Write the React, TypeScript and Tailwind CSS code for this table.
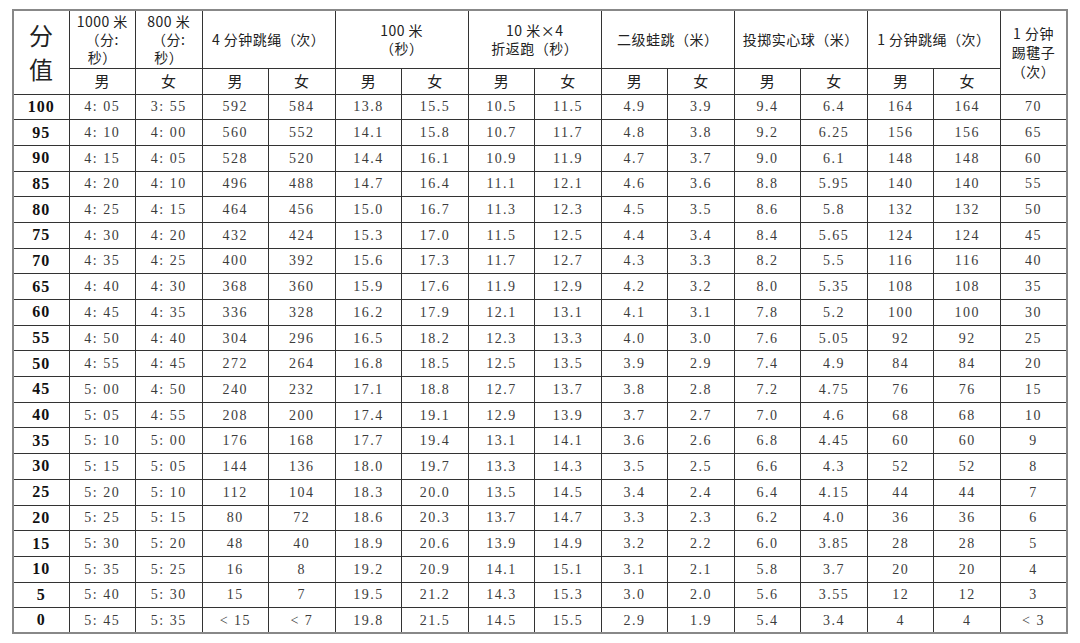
import React from 'react';

const rows: string[][] = [
  ['100', '4: 05', '3: 55', '592', '584', '13.8', '15.5', '10.5', '11.5', '4.9', '3.9', '9.4', '6.4', '164', '164', '70'],
  ['95', '4: 10', '4: 00', '560', '552', '14.1', '15.8', '10.7', '11.7', '4.8', '3.8', '9.2', '6.25', '156', '156', '65'],
  ['90', '4: 15', '4: 05', '528', '520', '14.4', '16.1', '10.9', '11.9', '4.7', '3.7', '9.0', '6.1', '148', '148', '60'],
  ['85', '4: 20', '4: 10', '496', '488', '14.7', '16.4', '11.1', '12.1', '4.6', '3.6', '8.8', '5.95', '140', '140', '55'],
  ['80', '4: 25', '4: 15', '464', '456', '15.0', '16.7', '11.3', '12.3', '4.5', '3.5', '8.6', '5.8', '132', '132', '50'],
  ['75', '4: 30', '4: 20', '432', '424', '15.3', '17.0', '11.5', '12.5', '4.4', '3.4', '8.4', '5.65', '124', '124', '45'],
  ['70', '4: 35', '4: 25', '400', '392', '15.6', '17.3', '11.7', '12.7', '4.3', '3.3', '8.2', '5.5', '116', '116', '40'],
  ['65', '4: 40', '4: 30', '368', '360', '15.9', '17.6', '11.9', '12.9', '4.2', '3.2', '8.0', '5.35', '108', '108', '35'],
  ['60', '4: 45', '4: 35', '336', '328', '16.2', '17.9', '12.1', '13.1', '4.1', '3.1', '7.8', '5.2', '100', '100', '30'],
  ['55', '4: 50', '4: 40', '304', '296', '16.5', '18.2', '12.3', '13.3', '4.0', '3.0', '7.6', '5.05', '92', '92', '25'],
  ['50', '4: 55', '4: 45', '272', '264', '16.8', '18.5', '12.5', '13.5', '3.9', '2.9', '7.4', '4.9', '84', '84', '20'],
  ['45', '5: 00', '4: 50', '240', '232', '17.1', '18.8', '12.7', '13.7', '3.8', '2.8', '7.2', '4.75', '76', '76', '15'],
  ['40', '5: 05', '4: 55', '208', '200', '17.4', '19.1', '12.9', '13.9', '3.7', '2.7', '7.0', '4.6', '68', '68', '10'],
  ['35', '5: 10', '5: 00', '176', '168', '17.7', '19.4', '13.1', '14.1', '3.6', '2.6', '6.8', '4.45', '60', '60', '9'],
  ['30', '5: 15', '5: 05', '144', '136', '18.0', '19.7', '13.3', '14.3', '3.5', '2.5', '6.6', '4.3', '52', '52', '8'],
  ['25', '5: 20', '5: 10', '112', '104', '18.3', '20.0', '13.5', '14.5', '3.4', '2.4', '6.4', '4.15', '44', '44', '7'],
  ['20', '5: 25', '5: 15', '80', '72', '18.6', '20.3', '13.7', '14.7', '3.3', '2.3', '6.2', '4.0', '36', '36', '6'],
  ['15', '5: 30', '5: 20', '48', '40', '18.9', '20.6', '13.9', '14.9', '3.2', '2.2', '6.0', '3.85', '28', '28', '5'],
  ['10', '5: 35', '5: 25', '16', '8', '19.2', '20.9', '14.1', '15.1', '3.1', '2.1', '5.8', '3.7', '20', '20', '4'],
  ['5', '5: 40', '5: 30', '15', '7', '19.5', '21.2', '14.3', '15.3', '3.0', '2.0', '5.6', '3.55', '12', '12', '3'],
  ['0', '5: 45', '5: 35', '< 15', '< 7', '19.8', '21.5', '14.5', '15.5', '2.9', '1.9', '5.4', '3.4', '4', '4', '< 3'],
];

const th = 'border border-[#333] text-center align-middle font-normal text-[14px] leading-[18px] text-[#222] tracking-[0.5px]';
const td = 'border border-[#333] text-center align-middle text-[14px] text-[#3c3c3c] tracking-[1.5px]';

// 男/女 子表头，共 7 组
const subHeads = ['男', '女', '男', '女', '男', '女', '男', '女', '男', '女', '男', '女', '男', '女'];

export default function App() {
  return (
    <div className="bg-white w-[1080px] h-[643px] pt-[9px] pl-[12px]">
      <table
        className="table-fixed border-collapse w-[1056px] border-2 border-[#888]"
        style={{ fontFamily: '"Noto Sans CJK SC", "Noto Sans", sans-serif' }}
      >
        <colgroup>
          <col className="w-[56px]" />
          {Array.from({ length: 15 }).map((_, i) => (
            <col key={i} />
          ))}
        </colgroup>
        <thead>
          <tr className="h-[58px]">
            <th rowSpan={2} className={`${th} text-[24px] leading-[34px] font-medium text-[#111]`}>
              分<br />值
            </th>
            <th className={th}>1000 米<br />（分:<br />秒）</th>
            <th className={th}>800 米<br />（分:<br />秒）</th>
            <th colSpan={2} className={th}>4 分钟跳绳（次）</th>
            <th colSpan={2} className={th}>100 米<br />（秒）</th>
            <th colSpan={2} className={th}>10 米×4<br />折返跑（秒）</th>
            <th colSpan={2} className={th}>二级蛙跳（米）</th>
            <th colSpan={2} className={th}>投掷实心球（米）</th>
            <th colSpan={2} className={th}>1 分钟跳绳（次）</th>
            <th rowSpan={2} className={`${th} leading-[19px]`}>
              1 分钟<br />踢毽子<br />（次）
            </th>
          </tr>
          <tr className="h-[26px]">
            {subHeads.map((s, i) => (
              <th key={i} className={`${th} text-[15px]`}>{s}</th>
            ))}
          </tr>
        </thead>
        <tbody style={{ fontFamily: '"Liberation Serif", "DejaVu Serif", serif' }}>
          {rows.map((r) => (
            <tr key={r[0]} className="h-[25.7px]">
              {r.map((v, i) =>
                i === 0 ? (
                  <td key={i} className={`${td} font-bold text-[16px] text-[#111] tracking-[1px]`}>{v}</td>
                ) : (
                  <td key={i} className={td}>{v}</td>
                )
              )}
            </tr>
          ))}
        </tbody>
      </table>
    </div>
  );
}
